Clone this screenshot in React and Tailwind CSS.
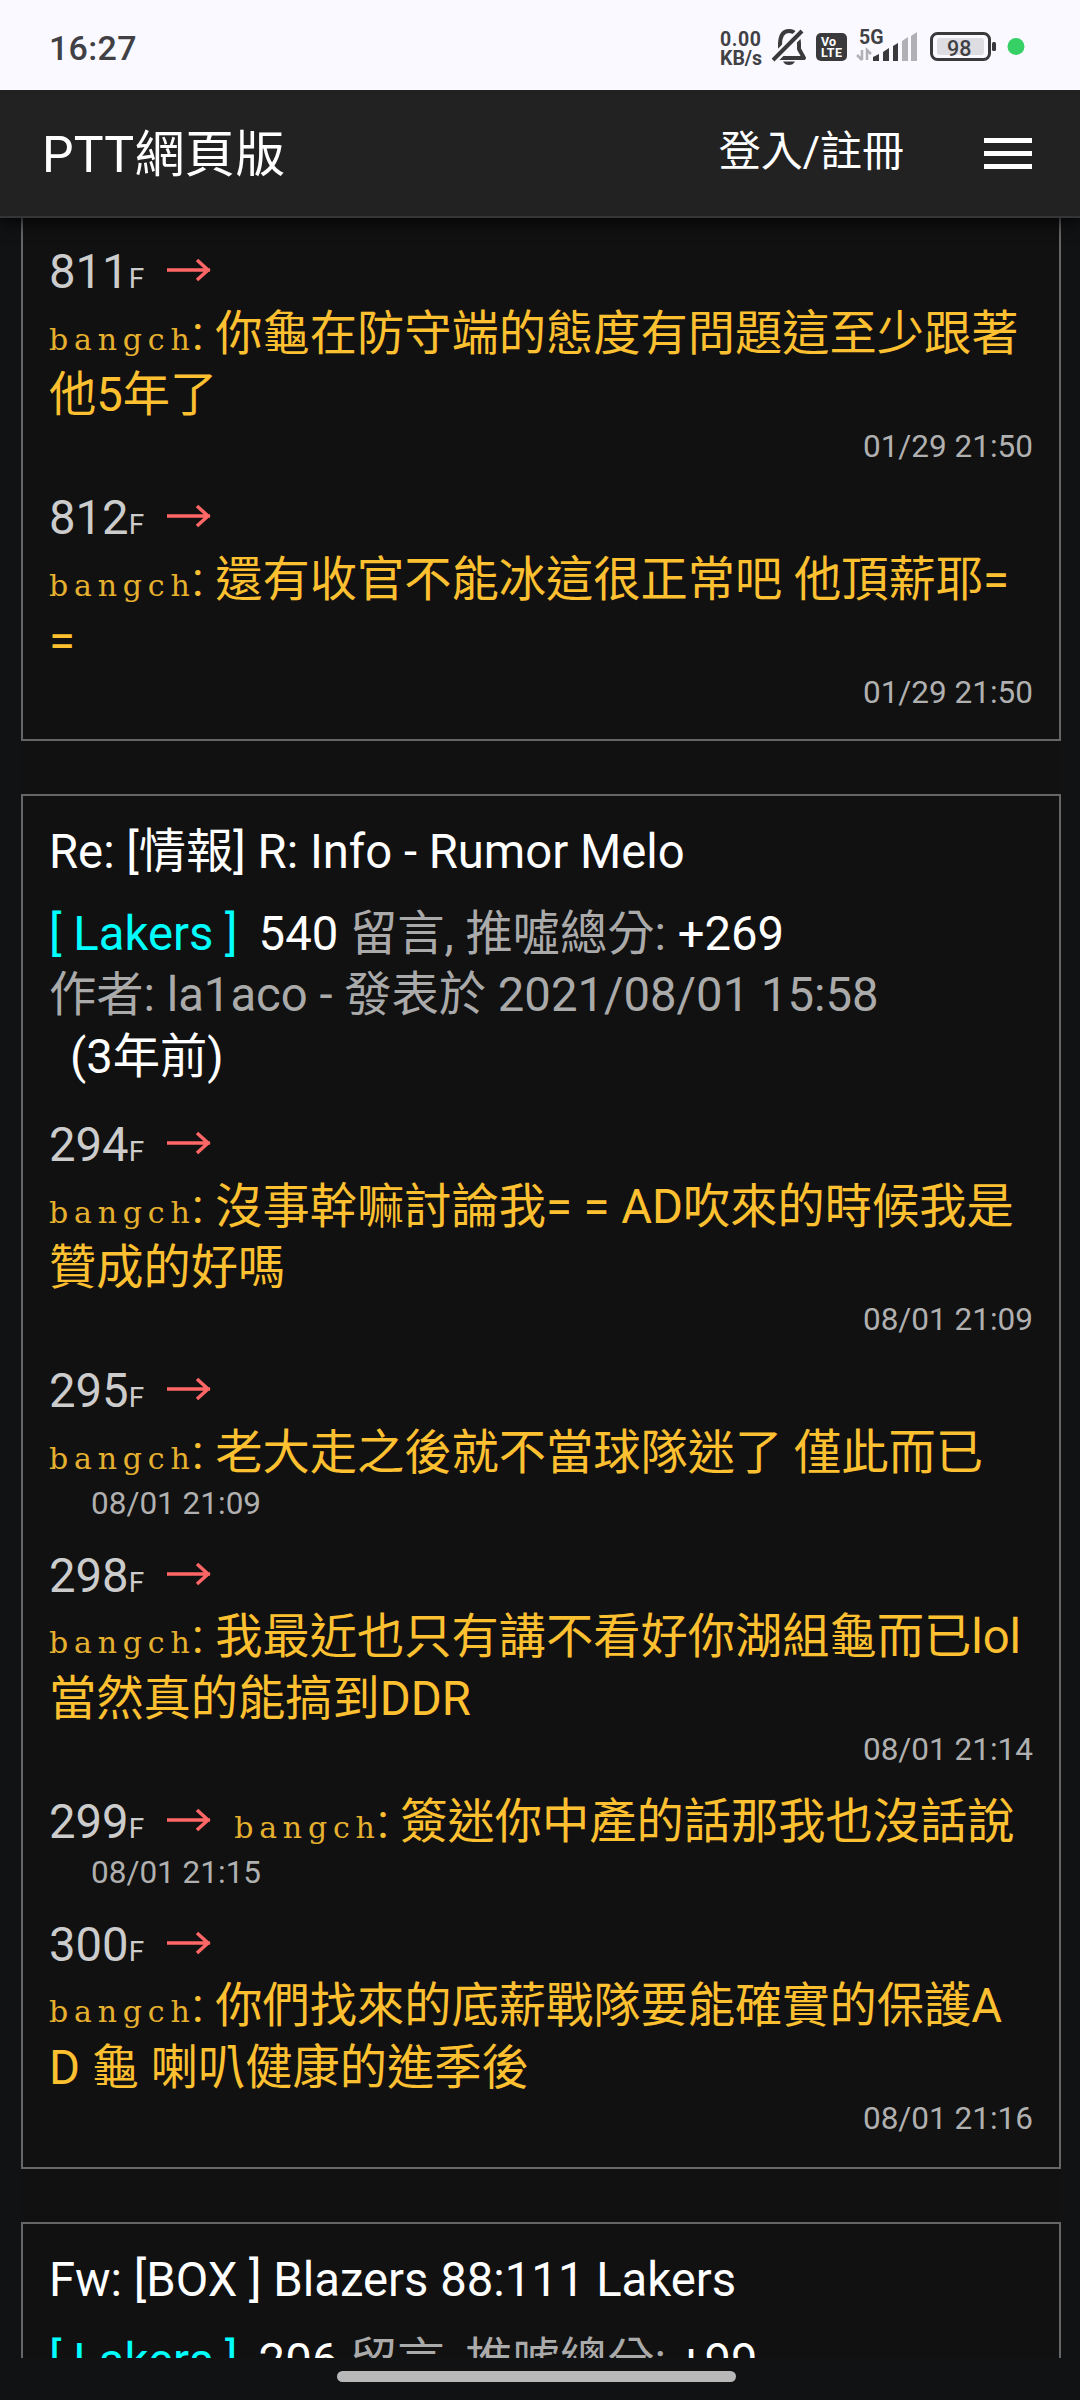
import React from "react";

const posts = [
  {
    comments: [
      { floor: 811, lines: ["你龜在防守端的態度有問題這至少跟著", "他5年了"], date: "01/29 21:50" },
      { floor: 812, lines: ["還有收官不能冰這很正常吧 他頂薪耶=", "="], date: "01/29 21:50" },
    ],
  },
  {
    title: "Re: [情報] R: Info - Rumor Melo",
    board: "Lakers",
    replies: 540,
    score: "+269",
    author: "la1aco",
    posted: "2021/08/01 15:58",
    ago: "(3年前)",
    comments: [
      { floor: 294, lines: ["沒事幹嘛討論我= = AD吹來的時候我是", "贊成的好嗎"], date: "08/01 21:09" },
      { floor: 295, lines: ["老大走之後就不當球隊迷了 僅此而已"], date: "08/01 21:09" },
      { floor: 298, lines: ["我最近也只有講不看好你湖組龜而已lol", "當然真的能搞到DDR"], date: "08/01 21:14" },
      { floor: 299, inline: true, lines: ["簽迷你中產的話那我也沒話說"], date: "08/01 21:15" },
      { floor: 300, lines: ["你們找來的底薪戰隊要能確實的保護A", "D 龜 喇叭健康的進季後"], date: "08/01 21:16" },
    ],
  },
  {
    title: "Fw: [BOX ] Blazers 88:111 Lakers",
    board: "Lakers",
    replies: 206,
    score: "+99",
    comments: [],
  },
];

const StatusBar = () => (
  <div className="relative z-20 flex h-[90px] shrink-0 items-center bg-[#faf9ff] pl-[49px] text-[#414145]">
    <span className="w-[671px] pt-1.5 text-[34px] font-medium tracking-[0.3px]">16:27</span>
    <div className="w-[52px] pt-2 text-[19.5px] leading-[19px] font-bold">
      <div className="tracking-[0.6px]">0.00</div>
      <div>KB/s</div>
    </div>
    <svg className="h-[90px] w-[308px]" viewBox="772 0 308 90" fill="none">
      <g stroke="#3a3a3d" strokeWidth="4">
        <path d="M780 54V45C780 36 783 31 789 31C796 31 799 37 799 44V49L804 58H779" strokeLinejoin="round" />
        <path d="M773 60L803 30" strokeWidth="9" stroke="#faf9ff" />
        <path d="M773 60L802 31" />
      </g>
      <path d="M783 61.500H795Q793 65 789 65Q785 65 783 61.500Z" fill="#3a3a3d" />
      <rect x="816" y="33" width="31" height="28" rx="5" fill="#3a3a3d" />
      <text x="821" y="45.500" fontSize="12.500" fontWeight="700" fill="#fff">Vo</text>
      <text x="821" y="57" fontSize="12.500" fontWeight="700" fill="#fff" textLength="21">LTE</text>
      <text x="859" y="44" fontSize="19.500" fontWeight="700" fill="#414145">5G</text>
      <path d="M862 50V60M857 55L862 60M867 60V50L871 54" stroke="#b0b0b5" strokeWidth="2.500" />
      <path d="M873 57L879 54V61H873ZM883 52L889 48V61H883ZM893 46L898 43V61H893Z" fill="#3a3a3d" />
      <path d="M902 41L908 37V61H902ZM911 36L917 32V61H911Z" fill="#b0b0b5" />
      <rect x="931.500" y="33.500" width="58" height="26" rx="6" stroke="#3a3a3d" strokeWidth="3" />
      <rect x="937" y="38" width="47" height="17" rx="3" fill="#dedde2" />
      <rect x="992" y="42" width="4" height="9" rx="1.500" fill="#3a3a3d" />
      <text x="947" y="55.500" fontSize="21.500" fontWeight="500" fill="#414145">98</text>
      <circle cx="1016" cy="46.500" r="8.500" fill="#37d067" />
    </svg>
  </div>
);

const Navbar = () => (
  <div className="relative z-10 flex h-32 shrink-0 items-center justify-between border-b-2 border-[#343536] bg-[#222] pr-12 pl-[42px] text-white shadow-[0_4px_16px_rgba(0,0,0,0.8)]">
    <span className="pt-1 text-[50px] tracking-[0.3px]">PTT網頁版</span>
    <div className="flex items-center">
      <span className="pb-1 text-[42px]">登入/註冊</span>
      <div className="ml-20 flex w-12 flex-col gap-2">
        <div className="h-[5px] bg-white" />
        <div className="h-[5px] bg-white" />
        <div className="h-[5px] bg-white" />
      </div>
    </div>
  </div>
);

const Arrow = () => (
  <svg className="ml-[23px] inline-block h-[30px] w-[46px] align-baseline" viewBox="0 0 46 30" fill="none" stroke="#ff6666" strokeWidth="3.500">
    <path d="M0 12H43M30 2L41 12L30 22" />
  </svg>
);

const Author = () => (
  <span className="inline-block w-[143px] font-['DejaVu_Serif'] text-[30px] leading-none tracking-[5.8px] text-[#e6b02f]">bangch</span>
);

const Comment = ({ floor, lines, date, inline }) => {
  const short = lines.length === 1;
  const text = (
    <>
      <Author />: {lines[0]}
    </>
  );
  return (
    <div className="text-[#fcc030]">
      <div className="h-[61.5px]">
        <span className="text-[#ccc]">
          {floor}
          <span className="text-[28px]">F</span>
        </span>
        <Arrow />
        {inline && <span className="ml-[21px]">{text}</span>}
      </div>
      {!inline && <div className="h-[61.5px]">{text}</div>}
      {lines[1] && <div className="h-[61.5px]">{lines[1]}</div>}
      <div className={short ? "h-[61.5px] pl-[42px] text-[31.5px] leading-[40px] text-[#b0b0b0]" : "h-[61.5px] text-right text-[31.5px] leading-[39px] text-[#b0b0b0]"}>
        {date}
      </div>
    </div>
  );
};

const Post = ({ title, board, replies, score, author, posted, ago, comments }) => (
  <div className={title ? "border-2 border-[#666] px-[26px] pb-1.5" : "border-2 border-t-0 border-[#666] px-[26px] pt-6 pb-[5px]"}>
    {title && (
      <div className="pt-[26px] pb-[27px] text-[#aaa]">
        <div className="mb-5 text-white">{title}</div>
        <div>
          <span className="text-[#0ff]">[ {board} ]</span>
          <span className="ml-[21px] text-white">{replies}</span> 留言, 推噓總分: <span className="text-white">{score}</span>
        </div>
        {author && (
          <>
            <div>
              作者: {author} - 發表於 {posted}
            </div>
            <div className="pl-[21px] text-white">{ago}</div>
          </>
        )}
      </div>
    )}
    {comments.map((c) => (
      <Comment key={c.floor} {...c} />
    ))}
  </div>
);

export default function App() {
  return (
    <div className="flex h-[2400px] w-[1080px] flex-col overflow-hidden bg-[#111214] font-['Roboto','Noto_Sans_CJK_TC',sans-serif]">
      <StatusBar />
      <Navbar />
      <div className="mr-[19px] ml-[21px] flex h-[2140px] shrink-0 flex-col gap-[53px] overflow-hidden bg-[#111] text-[47.25px] leading-[61.5px] whitespace-nowrap">
        {posts.map((post, i) => (
          <Post key={i} {...post} />
        ))}
      </div>
      <div className="flex flex-1 pt-[13px] pl-[337px]">
        <div className="h-[11px] w-[399px] rounded-full bg-[#b8b8b8]" />
      </div>
    </div>
  );
}
